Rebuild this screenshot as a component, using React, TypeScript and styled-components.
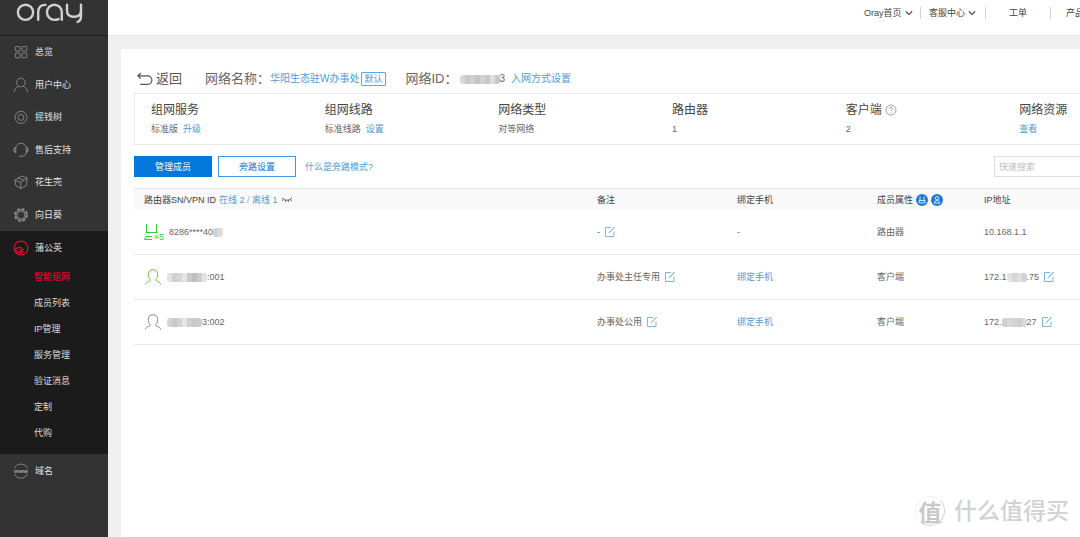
import React from 'react';
import styled, { createGlobalStyle } from 'styled-components';

const GlobalStyle = createGlobalStyle`
  * { box-sizing: border-box; }
  body {
    margin: 0;
    overflow-x: hidden;
    background: #f0f0f0;
    color: #666;
    font: 9px/14px "Liberation Sans", "Noto Sans CJK SC", sans-serif;
  }
  a { color: #4f9ad6; text-decoration: none; }
  button, input { font: inherit; }
  svg { display: block; flex: none; }
`;

const Shell = styled.div`
  display: flex;
  min-height: 100vh;
`;

/* Sidebar */
const Sidebar = styled.aside`
  flex: none;
  width: 108px;
  background: #333;
`;
const Brand = styled.a`
  display: block;
  height: 36px;
  border-bottom: 1px solid #1f1f1f;
`;
const Menu = styled.nav`
  display: flex;
  flex-direction: column;
`;
const MenuGroup = styled.div`
  display: grid;
  grid-auto-rows: 1fr;
  height: 195px;
`;
const MenuItem = styled.a`
  display: flex;
  align-items: center;
  gap: 6px;
  min-height: 32px;
  padding-left: 13px;
  color: #e2e2e2;
`;
const ActiveGroup = styled.div`
  padding-bottom: 8px;
  background: #1b1b1b;
`;
const ActiveHead = styled(MenuItem)`
  height: 33px;
`;
const SubItem = styled.a<{ $active?: boolean }>`
  display: flex;
  align-items: center;
  height: 26px;
  padding-left: 34px;
  color: ${(p) => (p.$active ? '#e4002f' : '#dcdcdc')};
  font-weight: ${(p) => (p.$active ? 500 : 400)};
`;

/* Header */
const Main = styled.div`
  flex: 1;
  min-width: 0;
  display: flex;
  flex-direction: column;
  overflow: hidden;
`;
const Header = styled.header`
  display: flex;
  justify-content: flex-end;
  height: 36px;
  padding-top: 7px;
  border-bottom: 1px solid #e6e6e6;
  background: #fff;
`;
const TopNav = styled.nav`
  display: flex;
  align-items: flex-start;
  margin-right: -36px;
`;
const TopLink = styled.a<{ $center?: boolean }>`
  display: flex;
  align-items: center;
  justify-content: ${(p) => (p.$center ? 'center' : 'flex-start')};
  gap: 3px;
  width: 65px;
  height: 12px;
  padding-left: ${(p) => (p.$center ? 0 : 8)}px;
  border-right: 1px solid #d4d4d4;
  color: #444;
  white-space: nowrap;
  &:last-child { border-right: 0; padding-left: 15px; }
`;

/* Content panel */
const Panel = styled.main`
  position: relative;
  flex: 1;
  margin: 13px 0 0 13px;
  padding: 20px 0 0 13px;
  background: #fff;
`;
const Content = styled.div`
  width: calc(100% + 98px);
`;
const TitleRow = styled.div`
  display: flex;
  align-items: center;
  height: 20px;
  margin-bottom: 4px;
  padding-left: 3px;
  font-size: 13px;
  white-space: nowrap;
`;
const Back = styled.a`
  display: flex;
  align-items: center;
  gap: 3px;
  margin-right: 23px;
  color: #555;
`;
const TitleLink = styled.a`
  font-size: 10px;
`;
const Tag = styled.span`
  margin: 0 20px 0 2px;
  padding: 0 2px;
  border: 1px solid #63a6dc;
  border-radius: 1px;
  color: #4f9ad6;
  font-size: 9px;
  line-height: 12px;
`;
const NetId = styled.span`
  display: flex;
  align-items: center;
  margin: 0 6px 0 2px;
  font-size: 10px;
`;
const Summary = styled.section`
  display: grid;
  grid-template-columns: repeat(6, 1fr);
  height: 52px;
  border: 1px solid #e6e6e6;
`;
const SummaryCell = styled.div`
  padding: 7px 0 0 16px;
  white-space: nowrap;
`;
const SummaryTitle = styled.h2`
  display: flex;
  align-items: center;
  gap: 3px;
  height: 18px;
  margin: 0 0 3px;
  color: #444;
  font-size: 12px;
  font-weight: 400;
`;
const SummaryValue = styled.div`
  display: flex;
  gap: 5px;
`;
const Toolbar = styled.div`
  display: flex;
  align-items: center;
  gap: 6px;
  padding: 11px 0;
`;
const Button = styled.button<{ $primary?: boolean }>`
  width: 78px;
  height: 21px;
  padding: 0;
  border: 1px solid ${(p) => (p.$primary ? '#0078dc' : '#3d97e6')};
  background: ${(p) => (p.$primary ? '#0078dc' : '#fff')};
  color: ${(p) => (p.$primary ? '#fff' : '#0078dc')};
`;
const HelpLink = styled.a`
  margin-left: 3px;
`;
const Search = styled.input`
  width: 184px;
  height: 21px;
  margin-left: auto;
  padding: 0 4px;
  border: 1px solid #ddd;
  border-radius: 0;
  background: #fff;
  &::placeholder { color: #bdbdbd; opacity: 1; }
`;
const Table = styled.table`
  width: 100%;
  table-layout: fixed;
  border-collapse: separate;
  border-spacing: 0;
`;
const Th = styled.th<{ $w?: number }>`
  ${(p) => (p.$w ? `width: ${p.$w}px;` : '')}
  height: 22px;
  padding: 0 0 0 10px;
  border-top: 1px solid #e6e6e6;
  background: #f9f9f9;
  color: #444;
  font-weight: 400;
  text-align: left;
`;
const Td = styled.td`
  height: 45px;
  padding: 0 0 0 10px;
  border-bottom: 1px solid #e8e8e8;
`;
const Inline = styled.div<{ $gap?: number }>`
  display: flex;
  align-items: center;
  gap: ${(p) => p.$gap ?? 0}px;
  white-space: nowrap;
`;
const Slash = styled.span`
  color: #aaa;
`;
/* The unit count sits over the lower right corner of the router drawing. */
const RouterMark = styled.span`
  position: relative;
  width: 20px;
  color: #2fce3a;
`;
const RouterCount = styled.span`
  position: absolute;
  right: 0;
  bottom: -1px;
  line-height: 9px;
`;
const IconButton = styled.button`
  margin-left: 4px;
  padding: 0;
  border: 0;
  background: none;
`;
const MosaicBox = styled.span`
  display: flex;
  height: 9px;
  border-radius: 3px;
  overflow: hidden;
`;
const Tile = styled.i<{ $c: string }>`
  width: 5px;
  background: ${(p) => p.$c};
`;
const Watermark = styled.div`
  position: absolute;
  right: 11px;
  bottom: 10px;
  display: flex;
  align-items: center;
  gap: 9px;
  color: #d2d2d2;
  font-size: 23px;
  font-weight: 500;
  line-height: 32px;
`;
const Seal = styled.span`
  display: grid;
  place-items: center;
  width: 30px;
  height: 30px;
  border: 1px solid #d4d4d4;
  border-top-color: #f2f2f2;
  border-left-color: #f2f2f2;
  border-radius: 50%;
  color: #c8c8c8;
  font-weight: 700;
`;

const Mosaic = ({ tiles }: { tiles: string[] }) => (
  <MosaicBox aria-hidden="true">
    {tiles.map((c, i) => <Tile key={i} $c={c} />)}
  </MosaicBox>
);

const Logo = () => (
  <svg width="108" height="35" viewBox="0 0 108 35" fill="none" stroke="#d0d0d0" strokeWidth="2.4" strokeLinecap="round" role="img" aria-label="oray">
    <circle cx="25.5" cy="12.3" r="7.6" />
    <path d="M38.2 19.8v-7.5q0-7.4 7.2-7.4" />
    <path d="M61.8 19.8v-7.5a7.4 7.6 0 1 0-7.4 7.6q2.600 0 4.200-1" />
    <path d="M67 4.600v5.600q0 6.600 7 6.600t7-6.600V4.600M81 10v6q0 4.800-3.400 5.900" />
  </svg>
);

const MenuIcon = ({ kind }: { kind: string }) => (
  <svg width="16" height="16" viewBox="0 0 16 16" fill="none" stroke={kind === 'pgy' ? '#d9122f' : '#969696'} strokeWidth={kind === 'pgy' ? 1.2 : 0.8}>
    {kind === 'grid' && (
      <>
        <rect x="2.3" y="2.6" width="4.8" height="4.6" rx=".6" /><rect x="9" y="2.6" width="4.8" height="4.6" rx=".6" />
        <rect x="2.3" y="9.2" width="4.8" height="4.6" rx=".6" /><rect x="9" y="9.2" width="4.8" height="4.6" rx=".6" />
      </>
    )}
    {kind === 'user' && <><circle cx="7.9" cy="5.5" r="4.3" /><path d="M1.2 15.4c.2-3.2 2-5.3 4.5-6.200M14.600 15.400c-.2-3.200-2-5.300-4.500-6.200" /></>}
    {kind === 'coin' && <><circle cx="8" cy="8.4" r="6" /><circle cx="8" cy="8.4" r="2.900" /></>}
    {kind === 'headset' && <><path d="M2.8 10.8V6.5a5.2 5.2 0 0 1 10.4 0v4.3a4 4 0 0 1-3.4 3.4" /><path d="M2.8 5.6Q.8 6 .9 8t1.9 2.6M13.2 5.6q2 .4 1.9 2.4t-1.9 2.6M6.3 14.3h3.4" strokeWidth="1.1" /></>}
    {kind === 'cube' && <path d="M1.800 6.200L8.600 2l5.600 2-1 7.600-5.600 2.900-4.800-3.100zM1.800 6.200l6 2.200L14.200 4M7.800 8.400l-.2 6.100M5 4.200l5.800 2" />}
    {kind === 'gear' && <><circle cx="8" cy="8" r="3.9" /><circle cx="8" cy="8" r="6.100" strokeWidth="1.600" strokeDasharray="2.8 1.99" /><circle cx="8" cy="8" r="5.2" /></>}
    {kind === 'pgy' && <><circle cx="8" cy="8" r="6.900" /><path d="M4.200 13.600a3.500 3.500 0 1 1 5.600-2.900 2.900 2.900 0 0 1-2.900 2.500M4.400 11.300a1.600 1.600 0 1 0 2-1.900" /></>}
    {kind === 'www' && (
      <>
        <path d="M1.6 5.4a6.9 6.9 0 0 1 12.8 0M1.6 10.8a6.9 6.9 0 0 0 12.8 0" />
        <text x="8" y="10" textAnchor="middle" fontSize="6" fill="#a5a5a5" stroke="none" fontWeight="700">www</text>
      </>
    )}
  </svg>
);

const Chevron = () => (
  <svg width="8" height="6" viewBox="0 0 8 6" fill="none" stroke="#444" strokeWidth="1.2"><path d="M.8 1.300l3.200 3.200 3.200-3.200" /></svg>
);
const BackIcon = () => (
  <svg width="16" height="14" viewBox="0 0 16 14" fill="none" stroke="#555" strokeWidth="1.200"><path d="M3.800 1L.9 3.800l3 2.800M1.200 3.800h9.400a4.300 4.300 0 0 1 0 8.600H3.200" /></svg>
);
const HelpIcon = () => (
  <svg width="12" height="12" viewBox="0 0 12 12" fill="none" stroke="#888" strokeWidth=".8">
    <circle cx="6" cy="6" r="5" /><path d="M4.5 4.8q0-1.5 1.5-1.5t1.5 1.3q0 .8-.9 1.3Q6 6.300 6 7.200M6 8.100v.9" />
  </svg>
);
const EditIcon = () => (
  <svg width="12" height="12" viewBox="0 0 12 12" fill="none" stroke="#7db6e4"><path d="M7 1.500H1.500v9h8.500V5.500" /><path d="M5 6.800L10.600 1" stroke="#4f9ad6" /></svg>
);
const Edit = ({ label }: { label: string }) => (
  <IconButton type="button" aria-label={label}><EditIcon /></IconButton>
);
const MemberIcon = ({ color }: { color: string }) => (
  <svg width="18" height="18" viewBox="0 0 18 18" fill="none" stroke={color}>
    <path d="M1.500 16.500c.2-2 1.500-2.600 3.200-3.100 1.600-.4 2-.9 1.700-1.700C4.800 10.300 4.400 8.400 4.400 6.400c0-3 1.700-4.700 4.600-4.700s4.600 1.700 4.600 4.700c0 2-.4 3.900-2 5.300-.3.800.1 1.300 1.700 1.700 1.700.5 3 1.100 3.200 3.100" />
  </svg>
);
const RouterIcon = () => (
  <svg width="14" height="17" viewBox="0 0 14 17" fill="none" stroke="#2fce3a"><path d="M2.500 0v8.500M12.500 0v8.500M1.500 8.500h12M8 12.500H2L.5 15.500h7.500" /></svg>
);
const EyeClosed = () => (
  <svg width="12" height="6" viewBox="0 0 12 6" fill="none" stroke="#555" strokeWidth=".9"><path d="M1 1q5 4.500 10 0M2.500 2.300L1.300 4M4.800 3l-.5 2M7.200 3l.5 2M9.500 2.300L10.700 4" /></svg>
);
const RouterBadge = () => (
  <svg width="12" height="12" viewBox="0 0 12 12" fill="none" stroke="#fff" strokeWidth=".8"><circle cx="6" cy="6" r="6" fill="#1f78e0" stroke="none" /><path d="M4 2.500v4M8 2.500v4M3 6.500h6v2.300H3z" /></svg>
);
const UserBadge = () => (
  <svg width="12" height="12" viewBox="0 0 12 12" fill="none" stroke="#fff" strokeWidth=".8"><circle cx="6" cy="6" r="6" fill="#1f78e0" stroke="none" /><circle cx="6" cy="4.200" r="1.700" /><path d="M3.200 9.200q0-2.600 2.800-2.600t2.800 2.600z" /></svg>
);

const menu = [
  ['grid', '总览'], ['user', '用户中心'], ['coin', '摇钱树'],
  ['headset', '售后支持'], ['cube', '花生壳'], ['gear', '向日葵'],
];
const subMenu = ['智能组网', '成员列表', 'IP管理', '服务管理', '验证消息', '定制', '代购'];

const summary: { title: string; value?: string; link?: string; help?: boolean }[] = [
  { title: '组网服务', value: '标准版', link: '升级' },
  { title: '组网线路', value: '标准线路', link: '设置' },
  { title: '网络类型', value: '对等网络' },
  { title: '路由器', value: '1' },
  { title: '客户端', value: '2', help: true },
  { title: '网络资源', link: '查看' },
];

export default function App() {
  return (
    <>
      <GlobalStyle />
      <Shell>
        <Sidebar>
          <Brand href="#"><Logo /></Brand>
          <Menu>
            <MenuGroup>
              {menu.map(([kind, label]) => (
                <MenuItem key={kind} href="#"><MenuIcon kind={kind} />{label}</MenuItem>
              ))}
            </MenuGroup>
            <ActiveGroup>
              <ActiveHead href="#"><MenuIcon kind="pgy" />蒲公英</ActiveHead>
              {subMenu.map((label, i) => (
                <SubItem key={label} href="#" $active={i === 0}>{label}</SubItem>
              ))}
            </ActiveGroup>
            <ActiveHead href="#"><MenuIcon kind="www" />域名</ActiveHead>
          </Menu>
        </Sidebar>

        <Main>
          <Header>
            <TopNav>
              <TopLink href="#">Oray首页<Chevron /></TopLink>
              <TopLink href="#">客服中心<Chevron /></TopLink>
              <TopLink href="#" $center>工单</TopLink>
              <TopLink href="#">产品</TopLink>
            </TopNav>
          </Header>

          <Panel>
            <Content>
              <TitleRow>
                <Back href="#"><BackIcon />返回</Back>
                <span>网络名称：</span>
                <TitleLink href="#">华阳生态驻W办事处</TitleLink>
                <Tag>默认</Tag>
                <span>网络ID：</span>
                <NetId>
                  <Mosaic tiles={['#d9d9d9', '#c9c9c9', '#d4cfcf', '#c4c4c4', '#d6d0cc', '#c8c8cc', '#dedede', '#c6c6cc']} />3
                </NetId>
                <TitleLink href="#">入网方式设置</TitleLink>
              </TitleRow>

              <Summary>
                {summary.map((s) => (
                  <SummaryCell key={s.title}>
                    <SummaryTitle>{s.title}{s.help && <HelpIcon />}</SummaryTitle>
                    <SummaryValue>
                      {s.value && <span>{s.value}</span>}
                      {s.link && <a href="#">{s.link}</a>}
                    </SummaryValue>
                  </SummaryCell>
                ))}
              </Summary>

              <Toolbar>
                <Button type="button" $primary>管理成员</Button>
                <Button type="button">旁路设置</Button>
                <HelpLink href="#">什么是旁路模式?</HelpLink>
                <Search type="search" aria-label="快速搜索" placeholder="快速搜索" />
              </Toolbar>

              <Table>
                <thead>
                  <tr>
                    <Th>
                      <Inline $gap={3}>
                        <span>路由器SN/VPN ID</span>
                        <span><a href="#">在线 2</a> <Slash>/</Slash> <a href="#">离线 1</a></span>
                        <EyeClosed />
                      </Inline>
                    </Th>
                    <Th $w={140}>备注</Th>
                    <Th $w={140}>绑定手机</Th>
                    <Th $w={107}><Inline $gap={3}>成员属性<RouterBadge /><UserBadge /></Inline></Th>
                    <Th $w={204}>IP地址</Th>
                  </tr>
                </thead>
                <tbody>
                  <tr>
                    <Td>
                      <Inline $gap={5}>
                        <RouterMark><RouterIcon /><RouterCount>×5</RouterCount></RouterMark>
                        <Inline>8286****40<Mosaic tiles={['#d2d2d2', '#dcdcdc']} /></Inline>
                      </Inline>
                    </Td>
                    <Td><Inline>-<Edit label="编辑备注" /></Inline></Td>
                    <Td>-</Td>
                    <Td>路由器</Td>
                    <Td>10.168.1.1</Td>
                  </tr>
                  <tr>
                    <Td>
                      <Inline $gap={5}>
                        <MemberIcon color="#6cc644" />
                        <Inline><Mosaic tiles={['#e2e2e2', '#d0d0d0', '#d6d6d6', '#e4e4e4', '#c9c9c9', '#c2bebe', '#cfcfcf', '#e2e2e2']} />:001</Inline>
                      </Inline>
                    </Td>
                    <Td><Inline>办事处主任专用<Edit label="编辑备注" /></Inline></Td>
                    <Td><a href="#">绑定手机</a></Td>
                    <Td>客户端</Td>
                    <Td><Inline>172.1<Mosaic tiles={['#e4e4e4', '#d6d6d6', '#e0e0e0', '#d2d2d2']} />.75<Edit label="编辑IP地址" /></Inline></Td>
                  </tr>
                  <tr>
                    <Td>
                      <Inline $gap={5}>
                        <MemberIcon color="#888" />
                        <Inline><Mosaic tiles={['#d4d4d4', '#c9c9c9', '#d4d4d4', '#e6e6e6', '#d0d0d0', '#cacaca', '#cdcdcd']} />3:002</Inline>
                      </Inline>
                    </Td>
                    <Td><Inline>办事处公用<Edit label="编辑备注" /></Inline></Td>
                    <Td><a href="#">绑定手机</a></Td>
                    <Td>客户端</Td>
                    <Td><Inline>172.<Mosaic tiles={['#cfcfcf', '#d8d8d8', '#d2d2d2', '#cecece', '#dadada']} />27<Edit label="编辑IP地址" /></Inline></Td>
                  </tr>
                </tbody>
              </Table>
            </Content>
            <Watermark><Seal>值</Seal>什么值得买</Watermark>
          </Panel>
        </Main>
      </Shell>
    </>
  );
}
